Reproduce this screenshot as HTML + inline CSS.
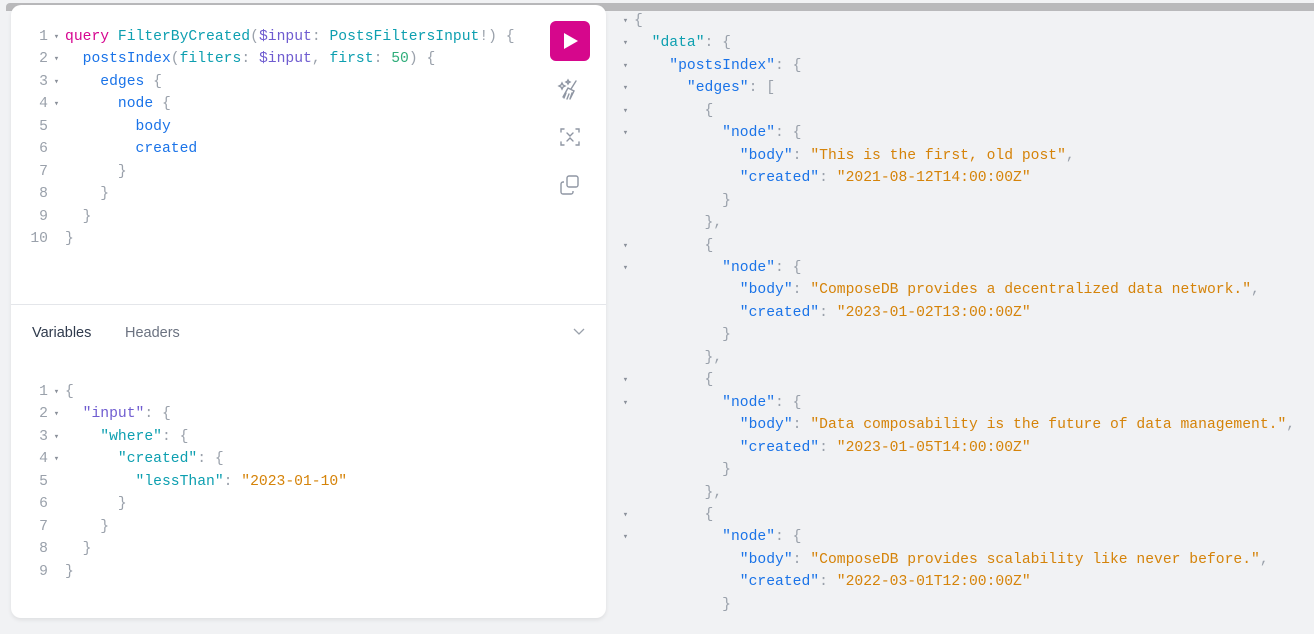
<!DOCTYPE html>
<html><head><meta charset="utf-8"><style>
body{margin:0;width:1314px;height:634px;background:#f1f2f4;position:relative;overflow:hidden;font-family:"Liberation Sans",sans-serif}
.topbar{position:absolute;left:6px;top:3px;width:1308px;height:8px;background:#b9b9bb;border-radius:4px 0 0 0}
.card{position:absolute;left:11px;top:5px;width:595px;height:613px;background:#fff;border-radius:10px;box-shadow:0 2px 4px rgba(0,0,0,.08)}
.code{position:absolute;font-family:"Liberation Mono",monospace;font-size:14.7px;line-height:22.45px;white-space:pre;color:#9aa1ab}
.ln{display:inline-block;width:37px;text-align:right;color:#9aa1ab}
.ar{display:inline-block;width:17px;font-size:9px;line-height:9px;vertical-align:1px;text-align:center;color:#8a909a}
.k{color:#d60590}.d{color:#0d9fb0}.v{color:#6f5cd0}.f{color:#1a73e8}.n{color:#2fad7a}.s{color:#d58309}.p{color:#9aa1ab}.t{color:#0d9fb0}
.div{position:absolute;left:0;top:299px;width:595px;height:1px;background:#e4e6ea}
.run{position:absolute;left:539px;top:16px;width:40px;height:40px;background:#d6078c;border-radius:6px}
</style></head><body>
<div class="topbar"></div>
<div class="card">
<div class="code" style="left:0;top:21px"><span class="ln">1</span><span class="ar">▾</span><span class="k">query</span> <span class="d">FilterByCreated</span>(<span class="v">$input</span>: <span class="d">PostsFiltersInput</span>!) {
<span class="ln">2</span><span class="ar">▾</span>  <span class="f">postsIndex</span>(<span class="d">filters</span>: <span class="v">$input</span>, <span class="d">first</span>: <span class="n">50</span>) {
<span class="ln">3</span><span class="ar">▾</span>    <span class="f">edges</span> {
<span class="ln">4</span><span class="ar">▾</span>      <span class="f">node</span> {
<span class="ln">5</span><span class="ar"> </span>        <span class="f">body</span>
<span class="ln">6</span><span class="ar"> </span>        <span class="f">created</span>
<span class="ln">7</span><span class="ar"> </span>      }
<span class="ln">8</span><span class="ar"> </span>    }
<span class="ln">9</span><span class="ar"> </span>  }
<span class="ln">10</span><span class="ar"> </span>}</div>
<div class="run"><svg width="40" height="40"><path d="M14 12 L28 20 L14 28Z" fill="#fff"/></svg></div>
<svg style="position:absolute;left:545px;top:72px" width="28" height="28" fill="none" stroke="#8f96a3" stroke-width="1.4" stroke-linecap="round"><path d="M20 4 L15 12 M12 11 L18 14 L14 22 M12 11 L7 20 M10 16 L8 21 M13 17 L11 22 M16 16 L14 22"/><path d="M6 6 l1 2 2 1-2 1-1 2-1-2-2-1 2-1z M12 3 l.7 1.3 1.3.7-1.3.7-.7 1.3-.7-1.3-1.3-.7 1.3-.7z"/></svg>
<svg style="position:absolute;left:547px;top:120px" width="24" height="24" fill="none" stroke="#8f96a3" stroke-width="1.4" stroke-linecap="round"><path d="M3 7V4h3 M18 4h3v3 M3 17v3h3 M18 20h3v-3 M9 8l3 3 3-3 M9 16l3-3 3 3"/></svg>
<svg style="position:absolute;left:547px;top:168px" width="24" height="24" fill="none" stroke="#8f96a3" stroke-width="1.4"><rect x="9" y="3" width="11" height="11" rx="2"/><path d="M6 9H5a2 2 0 0 0-2 2v8a2 2 0 0 0 2 2h8a2 2 0 0 0 2-2v-1"/></svg>
<div class="div"></div>
<div style="position:absolute;left:21px;top:320px;font-size:14.5px;color:#2f3a4c">Variables</div>
<div style="position:absolute;left:114px;top:320px;font-size:14.5px;color:#6b7280">Headers</div>
<svg style="position:absolute;left:561px;top:322px" width="14" height="10" fill="none" stroke="#9aa1ab" stroke-width="1.3"><path d="M2 2l5 5 5-5"/></svg>
<div class="code" style="left:0;top:376px"><span class="ln">1</span><span class="ar">▾</span>{
<span class="ln">2</span><span class="ar">▾</span>  <span class="v">"input"</span>: {
<span class="ln">3</span><span class="ar">▾</span>    <span class="t">"where"</span>: {
<span class="ln">4</span><span class="ar">▾</span>      <span class="t">"created"</span>: {
<span class="ln">5</span><span class="ar"> </span>        <span class="t">"lessThan"</span>: <span class="s">"2023-01-10"</span>
<span class="ln">6</span><span class="ar"> </span>      }
<span class="ln">7</span><span class="ar"> </span>    }
<span class="ln">8</span><span class="ar"> </span>  }
<span class="ln">9</span><span class="ar"> </span>}</div>
</div>
<div class="code" style="left:617px;top:10px"><span class="ar">▾</span>{
<span class="ar">▾</span>  <span class="t">"data"</span>: {
<span class="ar">▾</span>    <span class="f">"postsIndex"</span>: {
<span class="ar">▾</span>      <span class="f">"edges"</span>: [
<span class="ar">▾</span>        {
<span class="ar">▾</span>          <span class="f">"node"</span>: {
<span class="ar"> </span>            <span class="f">"body"</span>: <span class="s">"This is the first, old post"</span>,
<span class="ar"> </span>            <span class="f">"created"</span>: <span class="s">"2021-08-12T14:00:00Z"</span>
<span class="ar"> </span>          }
<span class="ar"> </span>        },
<span class="ar">▾</span>        {
<span class="ar">▾</span>          <span class="f">"node"</span>: {
<span class="ar"> </span>            <span class="f">"body"</span>: <span class="s">"ComposeDB provides a decentralized data network."</span>,
<span class="ar"> </span>            <span class="f">"created"</span>: <span class="s">"2023-01-02T13:00:00Z"</span>
<span class="ar"> </span>          }
<span class="ar"> </span>        },
<span class="ar">▾</span>        {
<span class="ar">▾</span>          <span class="f">"node"</span>: {
<span class="ar"> </span>            <span class="f">"body"</span>: <span class="s">"Data composability is the future of data management."</span>,
<span class="ar"> </span>            <span class="f">"created"</span>: <span class="s">"2023-01-05T14:00:00Z"</span>
<span class="ar"> </span>          }
<span class="ar"> </span>        },
<span class="ar">▾</span>        {
<span class="ar">▾</span>          <span class="f">"node"</span>: {
<span class="ar"> </span>            <span class="f">"body"</span>: <span class="s">"ComposeDB provides scalability like never before."</span>,
<span class="ar"> </span>            <span class="f">"created"</span>: <span class="s">"2022-03-01T12:00:00Z"</span>
<span class="ar"> </span>          }</div>
</body></html>
